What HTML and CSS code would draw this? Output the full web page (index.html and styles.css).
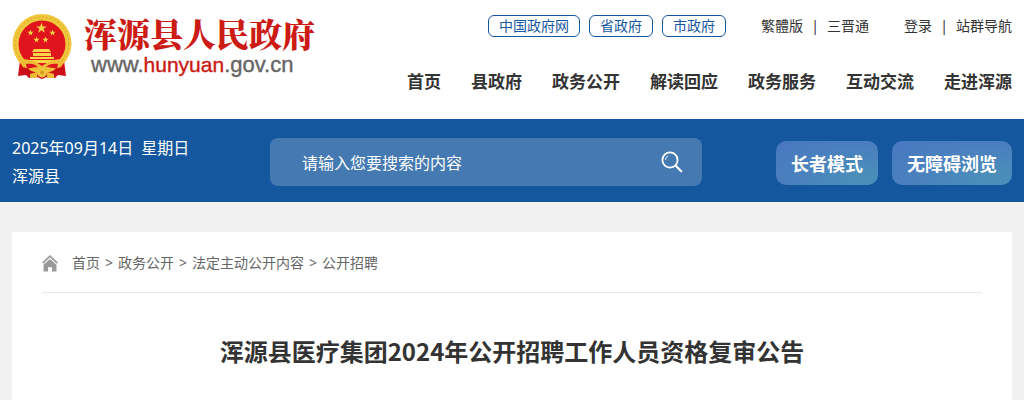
FILE: index.html
```html
<!DOCTYPE html>
<html lang="zh-CN">
<head>
<meta charset="utf-8">
<meta name="viewport" content="width=device-width, initial-scale=1">
<title>浑源县医疗集团2024年公开招聘工作人员资格复审公告</title>
<link rel="stylesheet" href="styles.css">
</head>
<body>
<header class="header">
  <a class="logo" href="#">
    <svg class="emblem" viewBox="0 0 60 66" aria-hidden="true">
      <path d="M8 46 6 62l8-1 3 3 8-1 5 2 5-2 8 1 3-3 8 1-2-16z" fill="#d5121b"/>
      <circle cx="30" cy="29.500" r="29.500" fill="#f0c63c"/>
      <circle cx="30" cy="29.500" r="26.500" fill="none" stroke="#dfae2c" stroke-width="1.200" stroke-dasharray="2 2"/>
      <circle cx="30" cy="30" r="23.500" fill="#df141c"/>
      <path d="m29.500 8.500 1.300 3.900h4.100l-3.300 2.400 1.200 3.900-3.300-2.400-3.300 2.400 1.200-3.900-3.300-2.400h4.100z" fill="#f8d447"/>
      <g fill="#f8d447">
        <path id="small" d="m18.500 15.500.8 2.300h2.300l-1.800 1.400.6 2.300-1.900-1.400-1.900 1.400.6-2.300-1.800-1.400h2.300z"/>
        <use href="#small" x="22"/><use href="#small" x="6" y="7"/><use href="#small" x="15" y="7"/>
        <path d="M22 35h15l2 3H20zM21 39h18v3H21zM18 43h24v2H18zM12 46h36v3H12z"/>
      </g>
      <path d="M8 46c7-2 15 1 22 6 7-5 15-8 22-6l-4 10c-6-3-12-2-18 1-6-3-12-4-18-1z" fill="#efbd35"/>
      <path d="M14 50c5-1 9 0 12 3-4 0-8 1-11 2zm32 0c-5-1-9 0-12 3 4 0 8 1 11 2z" fill="#df141c"/>
      <path d="M9 53c5 0 9 2 12 6l-4 4-3-3-6 1zm42 0c-5 0-9 2-12 6l4 4 3-3 6 1z" fill="#c90f18"/>
      <circle cx="30" cy="58.500" r="5" fill="#f0c63c"/>
      <circle cx="30" cy="58.500" r="2" fill="#d49b20"/>
      <path d="m18 60 7-2v6h-7zm24 0-7-2v6h7z" fill="#efbd35"/>
    </svg>
    <span class="logo-text">
      <span class="logo-name">浑源县人民政府</span>
      <span class="logo-url">www.<span class="logo-accent">hunyuan</span>.gov.cn</span>
    </span>
  </a>
  <div class="header-side">
    <div class="tools">
      <nav class="pills" aria-label="上级政府">
        <a class="pill" href="#">中国政府网</a>
        <a class="pill" href="#">省政府</a>
        <a class="pill" href="#">市政府</a>
      </nav>
      <div class="tool-group"><a href="#">繁體版</a><span class="bar">|</span><a href="#">三晋通</a></div>
      <div class="tool-group"><a href="#">登录</a><span class="bar">|</span><a href="#">站群导航</a></div>
    </div>
    <nav class="menu" aria-label="主导航">
      <a href="#">首页</a>
      <a href="#">县政府</a>
      <a href="#">政务公开</a>
      <a href="#">解读回应</a>
      <a href="#">政务服务</a>
      <a href="#">互动交流</a>
      <a href="#">走进浑源</a>
    </nav>
  </div>
</header>
<section class="band">
  <div class="today">
    <div class="date"><span>2025年09月14日</span><span>星期日</span></div>
    <div>浑源县</div>
  </div>
  <form class="search" role="search">
    <input class="search-input" type="text" placeholder="请输入您要搜索的内容" aria-label="搜索">
    <button class="search-button" type="button" aria-label="搜索">
      <svg width="22" height="22" viewBox="0 0 22 22" fill="none" stroke="#fff" stroke-linecap="round" aria-hidden="true">
        <circle cx="9" cy="9" r="7.600" stroke-width="1.800"/>
        <path d="m14.700 14.700 5.500 5.500" stroke-width="2.200"/>
        <path d="M4.600 8.500C4.800 6.800 5.600 5.700 6.800 5" stroke-width="1"/>
      </svg>
    </button>
  </form>
  <div class="modes">
    <button class="mode" type="button">长者模式</button>
    <button class="mode" type="button">无障碍浏览</button>
  </div>
</section>
<main class="page">
  <article class="card">
    <nav class="crumbs" aria-label="当前位置">
      <svg class="home" width="16" height="17" viewBox="0 0 16 17" aria-hidden="true">
        <path d="m.7 8.200 7.300-7 7.300 7" fill="none" stroke="#999" stroke-width="1.700"/>
        <path d="m8 4 6.500 5.700V16.500H10v-4.300H6v4.300H1.500V9.700z" fill="#999"/>
      </svg>
      <a href="#">首页</a><span>&gt;</span><a href="#">政务公开</a><span>&gt;</span><a href="#">法定主动公开内容</a><span>&gt;</span><a href="#">公开招聘</a>
    </nav>
    <h1 class="title">浑源县医疗集团2024年公开招聘工作人员资格复审公告</h1>
  </article>
</main>
</body>
</html>
```

FILE: styles.css
```css
* {
  box-sizing: border-box;
}

body {
  margin: 0;
  background: #f1f1f1;
  color: #333;
  font: 14px/20px "Noto Sans", "Noto Sans CJK SC", sans-serif;
}

a {
  color: inherit;
  text-decoration: none;
  white-space: nowrap;
}

button,
input {
  border: 0;
  font-family: inherit;
}

.header {
  display: flex;
  justify-content: space-between;
  padding: 14px 12px 24px;
  background: #fff;
}

.logo {
  display: flex;
  gap: 12px;
}

.emblem {
  width: 60px;
  height: 66px;
}

.logo-text {
  display: flex;
  flex-direction: column;
}

.logo-name {
  color: #cc1a14;
  font-family: "Noto Serif CJK SC", "Noto Sans CJK SC", serif;
  font-size: 33px;
  font-weight: 900;
  line-height: 38px;
}

.logo-url {
  padding-left: 7px;
  color: #666;
  font-family: "Liberation Sans", Arial, sans-serif;
  font-size: 22px;
  line-height: 26px;
  -webkit-text-stroke: 0.4px currentColor;
}

.logo-accent {
  color: #cc1a14;
  font-size: 21px;
}

.header-side {
  display: flex;
  flex-direction: column;
  align-items: flex-end;
  gap: 32px;
}

.tools {
  display: flex;
  align-items: center;
  gap: 35px;
}

.pills {
  display: flex;
  gap: 9px;
  padding-top: 1px;
}

.pill {
  padding: 0 10px;
  border: 1px solid #15579f;
  border-radius: 6px;
  color: #15579f;
}

.tool-group {
  display: flex;
}

.bar {
  width: 24px;
  text-align: center;
}

.menu {
  display: flex;
  gap: 30px;
  font-size: 17px;
  font-weight: 700;
  line-height: 26px;
}

.band {
  display: flex;
  align-items: center;
  padding: 15px 12px 12px;
  background: #15579f;
  color: #fff;
  font-size: 16px;
  line-height: 28px;
}

.today {
  flex: 0 0 258px;
}

.date {
  display: flex;
  gap: 8px;
}

.search {
  display: flex;
  flex: 1;
  height: 48px;
  border-radius: 8px;
  background: #4579b2;
}

.search-input {
  flex: 1;
  min-width: 0;
  padding: 2px 32px 0;
  background: none;
  color: #fff;
  font-size: 16px;
}

.search-input::placeholder {
  color: #fff;
  opacity: 1;
}

.search-button {
  display: flex;
  align-items: center;
  justify-content: center;
  width: 60px;
  padding: 0;
  background: none;
}

.modes {
  display: flex;
  gap: 14px;
  margin-left: 74px;
  padding-top: 2px;
}

.mode {
  height: 44px;
  padding: 0 15px;
  border-radius: 10px;
  background: radial-gradient(ellipse at 85% 85%, #4990b8 0%, #4a83bd 45%, #4976c2 100%);
  color: #fff;
  font-size: 18px;
  font-weight: 700;
  white-space: nowrap;
}

.page {
  padding: 30px 12px 0;
}

.card {
  padding: 0 30px 32px;
  background: #fff;
}

.crumbs {
  display: flex;
  align-items: center;
  padding: 20px 0 18px;
  border-bottom: 1px solid #e6e6e6;
  color: #666;
  line-height: 22px;
}

.crumbs span {
  width: 18px;
  text-align: center;
}

.home {
  margin-right: 14px;
}

.title {
  margin: 40px 0 0;
  font-family: "Noto Sans CJK SC", sans-serif;
  font-size: 24px;
  font-weight: 700;
  line-height: 36px;
  text-align: center;
}
```
